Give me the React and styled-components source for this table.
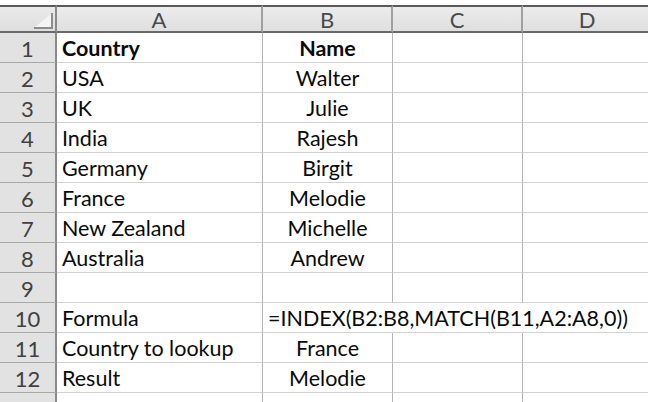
import React from 'react';
import styled, { createGlobalStyle } from 'styled-components';

const GlobalStyle = createGlobalStyle`
  html, body {
    margin: 0;
    padding: 0;
    background: #ffffff;
    overflow: hidden;
  }
  body {
    font-family: Lato, "Liberation Sans", sans-serif;
  }
`;

const Page = styled.div`
  width: 648px;
  height: 402px;
  overflow: hidden;
  padding-top: 5px;
  box-sizing: border-box;
`;

const Grid = styled.div`
  display: grid;
  grid-template-columns: 57px 206px 130px 130px 130px;
  grid-auto-rows: 30px;
  grid-template-rows: 28px;
`;

const Corner = styled.div`
  position: relative;
  box-sizing: border-box;
  background: linear-gradient(#eaeaea, #dedede);
  border-top: 2px solid #5a5a5a;
  border-bottom: 2px solid #6a6a6a;
  border-right: 2px solid #8a8a8a;
`;

const CornerMark = styled.svg`
  position: absolute;
  right: 2px;
  bottom: 2px;
`;

const ColHead = styled.div`
  box-sizing: border-box;
  display: flex;
  align-items: center;
  justify-content: center;
  background: linear-gradient(#ececec, #dfdfdf);
  border-top: 2px solid #5a5a5a;
  border-bottom: 2px solid #6a6a6a;
  border-right: 2px solid #a0a0a0;
  color: #4a4a4a;
  font-size: 22px;
  padding-top: 1px;
`;

const RowHead = styled.div`
  box-sizing: border-box;
  display: flex;
  align-items: center;
  justify-content: center;
  background: #e2e2e2;
  border-right: 2px solid #8a8a8a;
  border-bottom: 1px solid #a8a8a8;
  color: #404040;
  font-size: 22px;
  padding-top: 1px;
`;

const Cell = styled.div`
  box-sizing: border-box;
  display: flex;
  align-items: center;
  justify-content: ${p => (p.$center ? 'center' : 'flex-start')};
  padding-top: 1px;
  padding-left: ${p => (p.$center ? '0' : '5px')};
  border-right: 1px solid ${p => (p.$spill ? 'transparent' : '#b4b4b4')};
  border-bottom: 1px solid #d2d2d2;
  color: #0a0a0a;
  font-size: 21.5px;
  font-weight: ${p => (p.$bold ? 700 : 400)};
  white-space: nowrap;
  overflow: visible;
`;

const rows = [
  { a: 'Country', b: 'Name', bold: true },
  { a: 'USA', b: 'Walter' },
  { a: 'UK', b: 'Julie' },
  { a: 'India', b: 'Rajesh' },
  { a: 'Germany', b: 'Birgit' },
  { a: 'France', b: 'Melodie' },
  { a: 'New Zealand', b: 'Michelle' },
  { a: 'Australia', b: 'Andrew' },
  { a: '', b: '' },
  { a: 'Formula', b: '=INDEX(B2:B8,MATCH(B11,A2:A8,0))', formula: true },
  { a: 'Country to lookup', b: 'France' },
  { a: 'Result', b: 'Melodie' },
  { a: '', b: '' },
];

const App = () => (
  <>
    <GlobalStyle />
    <Page>
      <Grid>
        <Corner>
          <CornerMark width="20" height="17" viewBox="0 0 20 17">
            <polygon points="19,1 19,16 1,16" fill="#f4f4f4" />
            <polyline points="19,1 19,16 1,16" fill="none" stroke="#8c8c8c" strokeWidth="2" />
          </CornerMark>
        </Corner>
        {['A', 'B', 'C', 'D'].map(c => (
          <ColHead key={c}>{c}</ColHead>
        ))}
        {rows.map((r, i) => (
          <React.Fragment key={i}>
            <RowHead>{i + 1}</RowHead>
            <Cell $bold={r.bold}>{r.a}</Cell>
            {r.formula ? (
              <Cell $spill>{r.b}</Cell>
            ) : (
              <Cell $center $bold={r.bold}>{r.b}</Cell>
            )}
            <Cell $spill={r.formula} />
            <Cell />
          </React.Fragment>
        ))}
      </Grid>
    </Page>
  </>
);

export default App;
